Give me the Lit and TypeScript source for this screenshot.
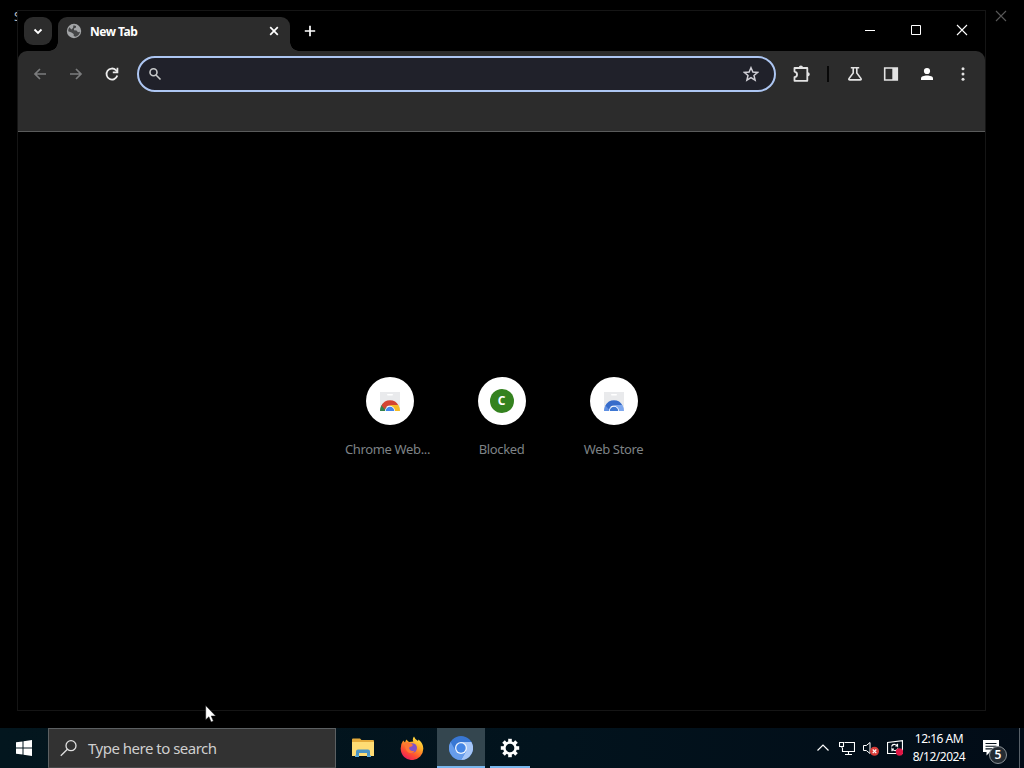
import { LitElement, html, css, svg } from 'lit'
import { customElement } from 'lit/decorators.js'

const icons = {
	chevron: svg`<path d="M4.500 6.500 8 10l3.500-3.500" fill="none" stroke="#fff" stroke-width="1.800" />`,
	globe: svg`
		<circle cx="8" cy="8" r="7.200" fill="#a3a5a7" />
		<path d="M7.500 2.300 10 3v1.500L8 5.500v1.700l2.500.3 1.500 1.700 2-.5q-.7 4-4.500 5l-1.800-.7v-2L5.500 9.500 2.200 8.300Q2 6 3.500 4.300l1.800 2.200L7 5z" fill="#454647" />
	`,
	close: svg`<path d="m4.200 4.200 7.600 7.600m0-7.600-7.600 7.600" stroke="#fff" stroke-width="1.700" />`,
	plus: svg`<path d="M8 2.800v10.400M2.800 8h10.400" stroke="#fff" stroke-width="1.700" />`,
	back: svg`<path d="M14 8H3m5-5L3 8l5 5" fill="none" stroke="#7b7c7d" stroke-width="1.700" />`,
	forward: svg`<path d="M2 8h11M8 3l5 5-5 5" fill="none" stroke="#7b7c7d" stroke-width="1.700" />`,
	reload: svg`
		<path d="M13.300 9.600A5.500 5.500 0 1 1 11.900 4.100L13.500 5.700" fill="none" stroke="#ececec" stroke-width="1.800" />
		<path d="M14.300 1.800v5.400H8.800V5.600h3.800V1.800z" fill="#ececec" />
	`,
	search: svg`<g fill="none" stroke="#c7c9ca" stroke-width="1.600"><circle cx="6.500" cy="6.300" r="3.500" /><path d="m9 9 4.500 4.500" /></g>`,
	star: svg`<path d="m8 1.700 1.900 4.300 4.700.4-3.600 3.100 1.100 4.600L8 11.700l-4.100 2.400L5 9.500 1.400 6.400l4.700-.4z" fill="none" stroke="#d0cfd6" stroke-width="1.500" />`,
	puzzle: svg`
		<path d="M1.500 3h12.800v12.800H1.500v-3.600c3.400-.6 3.400-5 0-5.600z" fill="none" stroke="#e3e3e3" stroke-width="1.800" stroke-linejoin="round" />
		<path d="M5.800 2.600a2.100 2.100 0 0 1 4.200 0zM14.700 7.200a2.100 2.100 0 0 1 0 4.200z" fill="#e3e3e3" />
	`,
	flask: svg`<path d="M3.800 1.800h8.400M6.200 2v5L2 12.600q-.6 1.300.8 1.300h10.400q1.400 0 .8-1.300L9.800 7V2" fill="none" stroke="#e3e3e3" stroke-width="1.600" />`,
	panel: svg`<path d="M1.700 2h12.600v12H1.700z" fill="none" stroke="#e3e3e3" stroke-width="1.600" /><path d="M9.300 2h5v12h-5z" fill="#e3e3e3" />`,
	person: svg`<circle cx="8" cy="5" r="3.100" fill="#fff" /><path d="M2 14v-1.600C2 8.600 14 8.600 14 12.400V14z" fill="#fff" />`,
	kebab: svg`<g fill="#e3e3e3"><circle cx="8" cy="2.800" r="1.500" /><circle cx="8" cy="8" r="1.500" /><circle cx="8" cy="13.200" r="1.500" /></g>`,
	minimize: svg`<path d="M3 8.500h10" stroke="#fff" />`,
	maximize: svg`<path d="M3.500 3.500h9v9h-9z" fill="none" stroke="#fff" />`,
	quit: svg`<path d="m3 3 10 10m0-10L3 13" stroke="#fff" stroke-width="1.100" />`,
	ghostQuit: svg`<path d="m3 3 10 10m0-10L3 13" stroke="#585858" stroke-width="1.100" />`,
}

const webStore = (ring: string[], core: string) => svg`
	<path d="M2 3h20v18H2z" fill="#e9eaec" />
	<rect x="9" y="5" width="6" height="1.600" rx=".8" fill="#fff" />
	<path d="M2 22a10 10 0 0 1 3-7.500l4 4-1 3.500z" fill="${ring[0]}" />
	<path d="M3.500 16.500a9.500 9.500 0 0 1 17 0H12q-4 0-5 4z" fill="${ring[1]}" />
	<path d="M12 16h8.300q1.700 2.500 1.700 6h-6z" fill="${ring[2]}" />
	<path d="M7 22a5 5 0 0 1 10 0z" fill="#fff" />
	<path d="M7.800 22a4.200 4.200 0 0 1 8.400 0z" fill="${core}" />
`

const folder = svg`
	<path d="M1 3.500q0-1 1-1h7l1.500 1.500H22q1 0 1 1v15H1z" fill="#e5ab3b" />
	<path d="M1 6h22v14H1z" fill="#ffdc74" />
	<path d="M5 20v-4.500q0-2 2-2h10q2 0 2 2V20h-3v-3H8v3z" fill="#4a93c4" />
	<path d="M4 19.500h4V21H4zm12 0h4V21h-4z" fill="#5aa9d8" />
`

const firefox = svg`
	<defs>
		<linearGradient id="fox" x1=".85" y1="0" x2=".25" y2="1">
			<stop offset="0" stop-color="#fff04a" />
			<stop offset=".38" stop-color="#ffa927" />
			<stop offset=".7" stop-color="#ff512f" />
			<stop offset="1" stop-color="#e9195f" />
		</linearGradient>
	</defs>
	<path d="M3.200 4.500 5 6.500l1.200-3L9 6l4.300-.5Q12 3 14 .5q1 3 4 4.500l.5-1.500q4.800 4 4.800 9A11.300 11.300 0 0 1 .7 13Q.5 8 3.200 4.500" fill="url(#fox)" />
	<circle cx="12.200" cy="12" r="4.800" fill="#8052c8" />
	<path d="M5 7q3-1.500 6 .5l2 1.500q-1 2-3.500 2-1 1.500.5 3 2 1.800 5 .5-2.500 4-6.500 2Q4.500 14 5 7" fill="#ff7634" />
`

const chromium = svg`
	<circle cx="12" cy="12" r="12" fill="#3977d3" />
	<path d="M12 6h10.400A12 12 0 0 1 12 24l5.200-9z" fill="#a6c6f8" />
	<path d="M1.600 6A12 12 0 0 0 12 24l5-8.500L6.800 15z" fill="#669ceb" />
	<circle cx="12" cy="12" r="6" fill="#edf3fd" />
	<circle cx="12" cy="12" r="4.700" fill="#4586e6" />
`

const teeth = [0, 45, 90, 135, 180, 225, 270, 315]
const gear = svg`
	<circle cx="12" cy="12" r="5.600" fill="none" stroke="#fff" stroke-width="2.500" />
	${teeth.map((a) => svg`<path d="M10.200 6.200V2.800h3.600v3.400z" fill="#fff" transform="rotate(${a} 12 12)" />`)}
`

const tasks = [
	{ art: folder, state: '' },
	{ art: firefox, state: '' },
	{ art: chromium, state: 'active' },
	{ art: gear, state: 'open' },
]

const tray = [
	svg`<path d="m2.500 10.500 5.500-5.500 5.500 5.500" fill="none" stroke="#fff" stroke-width="1.200" />`,
	svg`<path d="M5.500 2.500h10v9h-12V7.500M9.500 11.500V14M6 14.500h7M.5 2.500h4v4h-4zM2.500 6.500v1" fill="none" stroke="#fff" stroke-width="1.100" />`,
	svg`
		<path d="M.5 5.500h2.800L7 2.500v11l-3.700-3H.5z" fill="none" stroke="#fff" />
		<circle cx="11.500" cy="11.300" r="4.500" fill="#d83b37" />
		<path d="m9.700 9.500 3.600 3.600m0-3.600-3.600 3.600" stroke="#fff" stroke-width="1.200" />
	`,
	svg`
		<path d="M.5 2.500 15.500.700v12.800H.5z" fill="none" stroke="#fff" stroke-width="1.200" />
		<path d="M4.500 6.500q1-2.500 3.500-2 1.500 0 2.500 1.500V3.800m0 2.200H8.300M11 8.500q-1 2.500-3.500 2-1.500 0-2.500-1.500v2.200m0-2.200h2" fill="none" stroke="#fff" stroke-width="1.200" />
		<circle cx="12.500" cy="12" r="3.700" fill="#df1645" />
	`,
]

const icon = (art: unknown, size = 16, box = 16) =>
	html`<svg width=${size} height=${size} viewBox="0 0 ${box} ${box}">${art}</svg>`

/**
 * Browser window on its new tab page.
 */
@customElement('browser-window')
class BrowserWindow extends LitElement {
	static styles = css`
		:host {
			display: flex;
			flex-direction: column;
			box-sizing: border-box;
			border: 1px solid #151515;
			background: #000;
			color: #fff;
		}
		svg {
			display: block;
			flex: none;
		}
		.titlebar {
			display: flex;
			height: 40px;
			background: #000;
		}
		.tab-search {
			display: grid;
			place-items: center;
			width: 28px;
			height: 28px;
			margin: 6px 6px 0;
			border-radius: 9px;
			background: #2c2c2c;
		}
		.tab {
			position: relative;
			display: flex;
			align-items: center;
			box-sizing: border-box;
			width: 232px;
			height: 34px;
			margin-top: 6px;
			padding: 0 8px 6px;
			border-radius: 9px 9px 0 0;
			background: #2c2c2c;
			font-size: 12px;
			font-weight: 700;
			letter-spacing: -0.5px;
		}
		/* Flared feet where the tab meets the toolbar */
		.tab::before,
		.tab::after {
			content: '';
			position: absolute;
			bottom: 0;
			width: 9px;
			height: 9px;
		}
		.tab::before {
			left: -9px;
			background: radial-gradient(circle at 0 0, transparent 8.500px, #2c2c2c 9px);
		}
		.tab::after {
			right: -9px;
			background: radial-gradient(circle at 100% 0, transparent 8.500px, #2c2c2c 9px);
		}
		.tab span {
			flex: 1;
			margin-left: 8px;
			padding-top: 1px;
		}
		.new-tab {
			padding: 12px;
		}
		.controls {
			display: flex;
			margin-left: auto;
		}
		.control {
			display: grid;
			place-items: center;
			width: 46px;
			height: 38px;
		}
		.toolbar {
			display: flex;
			align-items: center;
			height: 45px;
			padding: 0 4px;
			border-radius: 9px 9px 0 0;
			background: #2c2c2c;
		}
		.button {
			display: grid;
			place-items: center;
			width: 36px;
			height: 36px;
		}
		.omnibox {
			display: flex;
			align-items: center;
			justify-content: space-between;
			box-sizing: border-box;
			flex: 1;
			height: 36px;
			margin: 0 8px 0 7px;
			padding: 0 15px 0 8px;
			border: 2px solid #adc6f2;
			border-radius: 18px;
			background: #20212a;
		}
		.separator {
			width: 2px;
			height: 16px;
			margin: 0 8px 0 7px;
			background: #080808;
		}
		.bookmarks {
			height: 35px;
			border-bottom: 1px solid #5a5b5b;
			background: #2c2c2c;
		}
		.page {
			display: flex;
			justify-content: center;
			flex: 1;
			padding-top: 245px;
		}
		.shortcut {
			display: flex;
			flex-direction: column;
			align-items: center;
			width: 112px;
			color: #7e8386;
			font-size: 13px;
			letter-spacing: -0.35px;
			line-height: 18px;
			white-space: nowrap;
		}
		.disc {
			display: grid;
			place-items: center;
			width: 48px;
			height: 48px;
			margin-bottom: 15px;
			border-radius: 50%;
			background: #fff;
		}
		.monogram {
			display: grid;
			place-items: center;
			width: 24px;
			height: 24px;
			border-radius: 50%;
			background: #34821f;
			color: #fff;
			font-size: 12px;
			font-weight: 700;
			letter-spacing: 0;
		}
		.clipped {
			margin-right: 4px;
		}
	`

	render() {
		return html`
			<div class="titlebar">
				<div class="tab-search">${icon(icons.chevron)}</div>
				<div class="tab">${icon(icons.globe)}<span>New Tab</span>${icon(icons.close)}</div>
				<div class="new-tab">${icon(icons.plus)}</div>
				<div class="controls">
					<div class="control">${icon(icons.minimize)}</div>
					<div class="control">${icon(icons.maximize)}</div>
					<div class="control">${icon(icons.quit)}</div>
				</div>
			</div>
			<div class="toolbar">
				<div class="button">${icon(icons.back)}</div>
				<div class="button">${icon(icons.forward)}</div>
				<div class="button">${icon(icons.reload)}</div>
				<div class="omnibox">${icon(icons.search)}${icon(icons.star)}</div>
				<div class="button">${icon(icons.puzzle, 18, 18)}</div>
				<div class="separator"></div>
				<div class="button">${icon(icons.flask)}</div>
				<div class="button">${icon(icons.panel)}</div>
				<div class="button">${icon(icons.person)}</div>
				<div class="button">${icon(icons.kebab)}</div>
			</div>
			<div class="bookmarks"></div>
			<div class="page">
				<div class="shortcut">
					<div class="disc">${icon(webStore(['#35824b', '#d44432', '#f5bc27'], '#4285ed'), 24, 24)}</div>
					<div class="clipped">Chrome Web...</div>
				</div>
				<div class="shortcut">
					<div class="disc"><div class="monogram">C</div></div>
					<div>Blocked</div>
				</div>
				<div class="shortcut">
					<div class="disc">${icon(webStore(['#5f90e3', '#376cca', '#7da7ee'], '#3d76d2'), 24, 24)}</div>
					<div>Web Store</div>
				</div>
			</div>
		`
	}
}

/**
 * Desktop taskbar: start, search, running apps, tray and clock.
 */
@customElement('task-bar')
class TaskBar extends LitElement {
	static styles = css`
		:host {
			display: flex;
			height: 40px;
			background: linear-gradient(90deg, #03161e, #02131d 55%, #020c17);
			color: #fff;
		}
		svg {
			display: block;
			flex: none;
		}
		.start {
			display: grid;
			place-items: center;
			width: 48px;
		}
		.search {
			display: flex;
			align-items: center;
			box-sizing: border-box;
			width: 288px;
			padding-left: 11px;
			border: 1px solid #5c6062;
			border-bottom-color: #454849;
			background: #323232;
			color: #cfcfcf;
			font-size: 15px;
			letter-spacing: -0.5px;
		}
		.search span {
			margin-left: 11px;
		}
		.tasks {
			display: flex;
			gap: 1px;
			margin-left: 3px;
		}
		.task {
			display: grid;
			place-items: center;
			box-sizing: border-box;
			width: 48px;
			border-bottom: 2px solid transparent;
			padding-top: 2px;
		}
		.task.active {
			border-color: #79b7ee;
			background: #34464f;
		}
		.task.open {
			background: linear-gradient(#79b7ee, #79b7ee) 50% 100% / 40px 2px no-repeat border-box;
		}
		.tray {
			display: flex;
			align-items: center;
			gap: 8px;
			margin-left: auto;
		}
		.clock {
			width: 72px;
			text-align: center;
			font-size: 12px;
			line-height: 18px;
			padding-top: 2px;
			letter-spacing: -0.5px;
			white-space: nowrap;
		}
		.notices {
			position: relative;
			width: 44px;
			padding: 12px 0 0 8px;
			box-sizing: border-box;
		}
		.count {
			position: absolute;
			left: 14px;
			top: 18px;
			display: grid;
			place-items: center;
			box-sizing: border-box;
			width: 18px;
			height: 18px;
			border: 1px solid #8a9095;
			border-radius: 50%;
			background: #252c33;
			font-size: 12px;
			font-weight: 600;
			line-height: 1;
		}
		.peek {
			width: 4px;
			border-left: 1px solid #596169;
		}
	`

	render() {
		return html`
			<div class="start">
				${icon(svg`<path d="M0 2.300 6.500 1.400v6.100H0zM7.500 1.200 16 0v7.500H7.500zM0 8.500h6.500v6.100L0 13.700zM7.500 8.500H16V16l-8.500-1.200z" fill="#fff" />`)}
			</div>
			<div class="search">
				${icon(svg`<g fill="none" stroke="#e0e0e0" stroke-width="1.300"><circle cx="11" cy="5.700" r="5" /><path d="M7.400 9.200 .8 15.800" /></g>`, 17, 17)}
				<span>Type here to search</span>
			</div>
			<div class="tasks">
				${tasks.map((task) => html`<div class="task ${task.state}">${icon(task.art, 24, 24)}</div>`)}
			</div>
			<div class="tray">${tray.map((art) => icon(art))}</div>
			<div class="clock">
				<div>12:16 AM</div>
				<div>8/12/2024</div>
			</div>
			<div class="notices">
				${icon(svg`<path d="M0 0h16v12H7l-3.500 3.500V12H0z" fill="#fff" /><path d="M2.500 3.500h11m-11 2.700h11m-11 2.700h7" stroke="#07131d" stroke-width="1.100" />`)}
				<div class="count">5</div>
			</div>
			<div class="peek"></div>
		`
	}
}

@customElement('app-root')
class AppRoot extends LitElement {
	static styles = css`
		:host {
			position: relative;
			display: flex;
			flex-direction: column;
			justify-content: flex-end;
			width: 1024px;
			height: 768px;
			overflow: hidden;
			background: #000;
			font-family: 'Noto Sans', 'Open Sans', sans-serif;
		}
		/* Settings window, mostly covered by the browser */
		.behind {
			position: absolute;
			left: 14px;
			top: 9px;
			color: #bbb;
			font-size: 12px;
			line-height: 16px;
		}
		.behind-close {
			position: absolute;
			left: 993px;
			top: 8px;
			line-height: 0;
		}
		browser-window {
			position: absolute;
			left: 17px;
			top: 10px;
			width: 969px;
			height: 701px;
		}
		.pointer {
			position: absolute;
			left: 205px;
			top: 705px;
		}
	`

	render() {
		return html`
			<div class="behind">S</div>
			<div class="behind-close">${icon(icons.ghostQuit)}</div>
			<browser-window></browser-window>
			<task-bar></task-bar>
			<svg class="pointer" width="12" height="18" viewBox="0 0 12 18">
				<path d="M.7.600v14.200l3.200-3 2.200 5.200 2.300-1-2.200-5h4.500z" fill="#fff" stroke="#111" stroke-width=".5" />
			</svg>
		`
	}
}

export default AppRoot
